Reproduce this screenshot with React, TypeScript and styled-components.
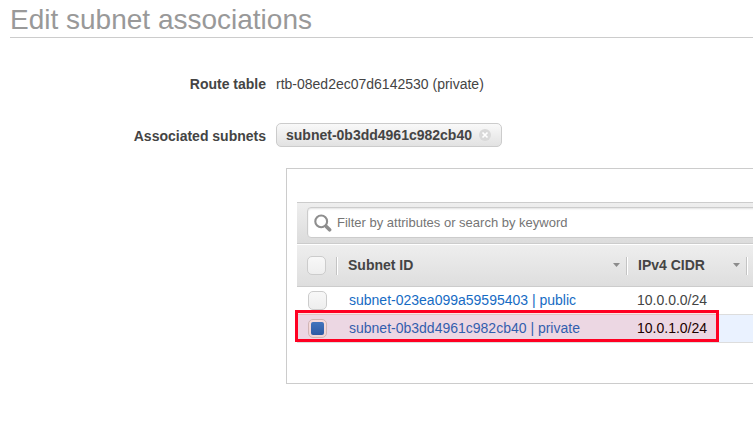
import React from 'react';
import styled, { createGlobalStyle } from 'styled-components';

const GlobalStyle = createGlobalStyle`
  body {
    margin: 0;
    overflow: hidden;
    background: #fff;
    color: #444;
    font: 14px/20px "Liberation Sans", Arial, sans-serif;
  }
  * { box-sizing: border-box; }
`;

const Page = styled.main`
  height: 424px;
  overflow: hidden;
  padding-left: 10px;
`;

const Title = styled.h1`
  height: 38px;
  margin: 0;
  padding-top: 4px;
  border-bottom: 1px solid #ccc;
  color: #999;
  font-size: 28px;
  font-weight: 400;
  line-height: 32px;
`;

const Field = styled.div<{ $top: number }>`
  display: grid;
  grid-template-columns: 256px auto;
  column-gap: 10px;
  align-items: center;
  justify-content: start;
  height: 24px;
  margin-top: ${(p) => p.$top}px;
  white-space: nowrap;
`;

const Label = styled.span<{ $drop?: number }>`
  padding-top: ${(p) => p.$drop ?? 0}px;
  text-align: right;
  font-weight: 700;
`;

const Chip = styled.span`
  display: flex;
  align-items: center;
  width: 226px;
  height: 24px;
  padding-left: 9px;
  border: 1px solid #ccc;
  border-radius: 5px;
  background: linear-gradient(#f9f9f9, #e2e2e2);
  font-weight: 700;
`;

const ChipClose = styled.svg`
  margin-left: 7px;
`;

const Panel = styled.section`
  height: 216px;
  width: 600px;
  margin: 21px 0 0 276px;
  padding: 33px 0 0 10px;
  border: 1px solid #ccc;
`;

const Toolbar = styled.div`
  height: 42px;
  padding: 4px 0 0 10px;
  border: solid #ccc;
  border-width: 1px 0;
  background: linear-gradient(#eee, #dcdcdc);
`;

const Search = styled.label`
  display: flex;
  align-items: center;
  height: 31px;
  width: 560px;
  padding-left: 6px;
  gap: 5px;
  border: 1px solid #ccc;
  border-radius: 4px;
  background: #fff;
  box-shadow: inset 0 1px 2px rgba(0, 0, 0, 0.12);
  color: #757575;
  font-size: 13px;
`;

const columns = '39px 290px 120px 1fr';

const HeaderRow = styled.div`
  display: grid;
  grid-template-columns: ${columns};
  align-items: center;
  height: 43px;
  border-top: 1px solid #fff;
  border-bottom: 1px solid #ccc;
  background: linear-gradient(#eee, #dedede);
`;

const HeaderCell = styled.div`
  display: flex;
  align-items: center;
  justify-content: space-between;
  height: 18px;
  padding: 0 6px 2px 11px;
  border-left: 1px solid #c4c4c4;
  box-shadow: inset 1px 0 #fff;
  font-weight: 700;
`;

const CheckCell = styled.div<{ $indent: number }>`
  display: flex;
  padding-left: ${(p) => p.$indent}px;
`;

const Row = styled.div<{ $selected?: boolean }>`
  display: grid;
  grid-template-columns: ${columns};
  align-items: center;
  height: 28px;
  border-bottom: 1px solid #ddd;
  background: ${(p) => (p.$selected ? '#eaf2ff' : '#fff')};
  color: ${(p) => (p.$selected ? '#000' : '#444')};
`;

const Rows = styled.div`
  position: relative;
`;

const Cell = styled.span`
  padding: 0 0 2px 11px;
`;

const SubnetLink = styled(Cell)`
  padding-left: 13px;
  color: #166bc4;
`;

const Checkbox = styled.span<{ $checked?: boolean }>`
  display: grid;
  place-items: center;
  width: 19px;
  height: 19px;
  border: 1px solid #ccc;
  border-radius: 5px;
  background: linear-gradient(#f8f8f8, #eee);
  &::after {
    content: '';
    display: ${(p) => (p.$checked ? 'block' : 'none')};
    width: 13px;
    height: 13px;
    border-radius: 2px;
    background: linear-gradient(#2d83d4, #1465b8);
  }
`;

const Highlight = styled.div`
  position: absolute;
  left: -2px;
  top: 23px;
  width: 424px;
  height: 32px;
  border: 3px solid #ff0022;
  background: rgba(255, 0, 0, 0.11);
`;

function Caret() {
  return (
    <svg width="7" height="4" viewBox="0 0 7 4">
      <path d="M0 0h7L3.5 4z" fill="#8c8c8c" />
    </svg>
  );
}

export default function App() {
  return (
    <>
      <GlobalStyle />
      <Page>
        <Title>Edit subnet associations</Title>
        <Field $top={34}>
          <Label>Route table</Label>
          <span>rtb-08ed2ec07d6142530 (private)</span>
        </Field>
        <Field $top={27}>
          <Label $drop={2}>Associated subnets</Label>
          <Chip>
            subnet-0b3dd4961c982cb40
            <ChipClose width="12" height="12" viewBox="0 0 12 12">
              <circle cx="6" cy="6" r="6" fill="#d9d9d9" />
              <path d="M3.5 3.5l5 5m0-5l-5 5" stroke="#fff" strokeWidth="1.7" />
            </ChipClose>
          </Chip>
        </Field>
        <Panel>
          <Toolbar>
            <Search>
              <svg width="18" height="18" viewBox="0 0 18 18" fill="none" stroke="#8e8e8e">
                <circle cx="7.2" cy="7.4" r="5.9" strokeWidth="2.1" />
                <path d="M11.2 11.4l1.8 1.8" strokeWidth="2.4" />
                <path d="M12.8 13l2.8 2.8" strokeWidth="3.6" strokeLinecap="round" />
              </svg>
              Filter by attributes or search by keyword
            </Search>
          </Toolbar>
          <HeaderRow>
            <CheckCell $indent={10}><Checkbox /></CheckCell>
            <HeaderCell>Subnet ID<Caret /></HeaderCell>
            <HeaderCell>IPv4 CIDR<Caret /></HeaderCell>
            <HeaderCell />
          </HeaderRow>
          <Rows>
            <Row>
              <CheckCell $indent={11}><Checkbox /></CheckCell>
              <SubnetLink>subnet-023ea099a59595403 | public</SubnetLink>
              <Cell>10.0.0.0/24</Cell>
            </Row>
            <Row $selected>
              <CheckCell $indent={11}><Checkbox $checked /></CheckCell>
              <SubnetLink>subnet-0b3dd4961c982cb40 | private</SubnetLink>
              <Cell>10.0.1.0/24</Cell>
            </Row>
            <Highlight />
          </Rows>
        </Panel>
      </Page>
    </>
  );
}
